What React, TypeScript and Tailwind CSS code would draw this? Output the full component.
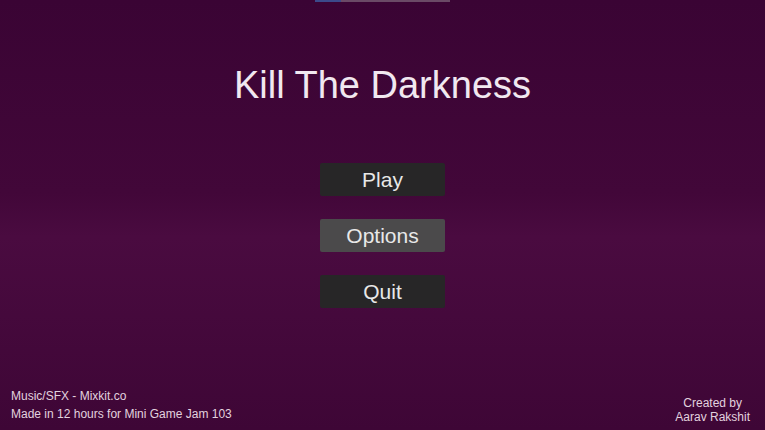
import React from 'react'

const buttons = [
  { label: 'Play', active: false },
  { label: 'Options', active: true },
  { label: 'Quit', active: false },
]

export default function App() {
  return (
    <div
      className="relative w-[765px] h-[430px] overflow-hidden flex flex-col items-center bg-[linear-gradient(180deg,#3a0434_0%,#420739_45%,#4a0b40_55%,#3e0636_100%)] text-white"
      style={{ fontFamily: '"Liberation Sans", Arial, sans-serif' }}
    >
      {/* top progress strip */}
      <div className="absolute top-0 left-[315px] w-[135px] h-[2px] flex bg-[#6a4a66]">
        <div className="w-[26px] h-full bg-[#3b4a8a]" />
      </div>

      <h1 className="mt-[62px] text-[38px] leading-[46px] text-[#f1e8f0]">Kill The Darkness</h1>

      <div className="mt-[55px] flex flex-col gap-[23px]">
        {buttons.map((b) => (
          <button
            key={b.label}
            className={`w-[125px] h-[33px] rounded-[2px] text-[21px] text-[#e8e8e8] ${b.active ? 'bg-[#4b4a4b]' : 'bg-[#272627]'}`}
          >
            {b.label}
          </button>
        ))}
      </div>

      <div className="absolute left-[11px] bottom-[9px] flex flex-col gap-[4px] text-[12px] leading-[14px] text-[#e2d2df]">
        <span>Music/SFX - Mixkit.co</span>
        <span>Made in 12 hours for Mini Game Jam 103</span>
      </div>

      <div className="absolute right-[15px] bottom-[6px] flex flex-col items-center text-[12px] leading-[14px] text-[#e2d2df]">
        <span>Created by</span>
        <span>Aarav Rakshit</span>
      </div>
    </div>
  )
}
